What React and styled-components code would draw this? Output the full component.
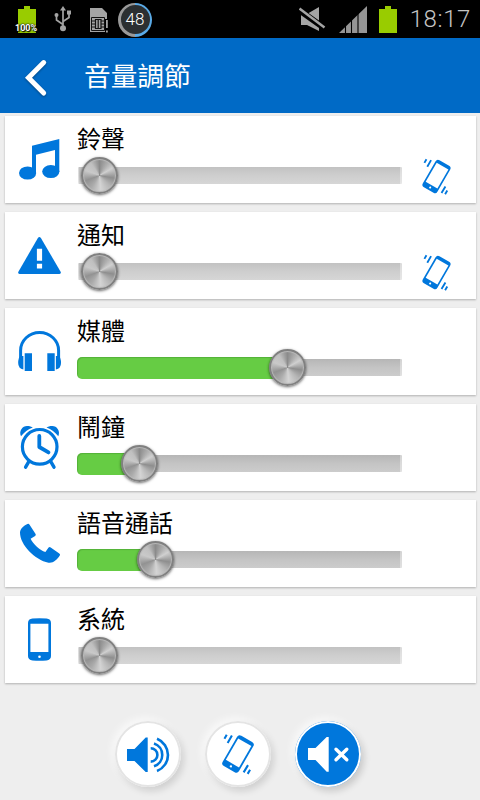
// Styled Components
import styled, { createGlobalStyle, css } from "styled-components";
//

const BLUE = "#0077dc";

// Status bar icons
const BatteryIcon = () => (
  <svg width="18" height="27" viewBox="0 0 18 27">
    <path d="M6 0h6v3h6v24H0V3h6z" fill="#99cc00" />
  </svg>
);

const UsbIcon = () => (
  <svg width="18" height="26" viewBox="0 0 18 26">
    <g fill="none" stroke="#a4a4a4" strokeWidth="1.7">
      <path d="M9 22V3" />
      <path d="M9 18.5L2.5 14V9.5" />
      <path d="M9 15.5L15 11.5V7" />
    </g>
    <g fill="#a4a4a4">
      <circle cx="9" cy="22.3" r="3" />
      <path d="M9 0l3 4.5H6z" />
      <circle cx="2.5" cy="9" r="2" />
      <path d="M13 4.5h4v4h-4z" />
    </g>
  </svg>
);

const SimIcon = () => (
  <svg width="19" height="26" viewBox="0 0 19 26">
    <path d="M0 0h12l5 5v12h-2v7H0z" fill="#a4a4a4" />
    <path d="M1.5 9.5h13v13h-13z" fill="#a4a4a4" stroke="#111" />
    <path
      d="M1.5 13h4M1.5 16h4M1.5 19h4M11 13h4M11 16h4M11 19h4M5.5 11.5h5.5v9H5.500zM8.2 11.5v9"
      fill="none"
      stroke="#111"
      strokeWidth="1.2"
    />
    <path d="M15 11h3v14h-3z" fill="#000" />
    <path d="M16 12h1.8v8H16zM16 22.5h1.8v2H16z" fill="#a4a4a4" />
  </svg>
);

const SilentIcon = () => (
  <svg width="27" height="26" viewBox="0 0 27 26">
    <path d="M2 8h6L20 1v24L8 19H2z" fill="#a4a4a4" />
    <path d="M0 4L26 22.5" stroke="#000" strokeWidth="6" />
    <path d="M.5 2.5L25.5 21.5" stroke="#a4a4a4" strokeWidth="2.4" />
  </svg>
);

const SignalIcon = () => (
  <svg width="28" height="27" viewBox="0 0 28 27">
    <path d="M28 0v27H0z" fill="#959595" />
    <path d="M6.5 15v12M12.5 8v19M19 4v23" stroke="#000" strokeWidth="1.1" />
  </svg>
);
//

// Row icons
const MusicIcon = () => (
  <>
    <path d="M17 9.7L44.3 3v32.7H40V14L21 18.7V37h-4z" />
    <ellipse cx="12.6" cy="37" rx="8.6" ry="6.6" />
    <ellipse cx="35.8" cy="35.6" rx="8.6" ry="6.5" />
  </>
);

const WarningIcon = () => (
  <>
    <path d="M22.9 5.9Q24.4 3.9 25.9 5.9L45.6 39.8Q46.5 41.8 44.5 42h-40Q2.500 41.8 3.4 39.8z" />
    <path
      d="M21.9 16.8h5.2v12h-5.2zM21.9 31.8h5.2v4.6h-5.2z"
      fill="#fff"
    />
  </>
);

const HeadphonesIcon = () => (
  <>
    <path
      d="M5.6 30v-7.5a19 18 0 0 1 38 0V30"
      fill="none"
      stroke={BLUE}
      strokeWidth="3"
    />
    <path d="M8.4 28v13.5Q3.2 40.5 3.2 35T5.5 28z" />
    <path d="M40.9 28v13.5Q46 40.5 46 35T43.7 28z" />
    <path d="M9.7 25.3H17V43H9.7zM32.3 25.3h7.4V43h-7.4z" />
  </>
);

const AlarmIcon = () => (
  <>
    <g fill="none" stroke={BLUE} strokeLinecap="round" strokeLinejoin="round">
      <circle cx="24.7" cy="22.8" r="17.3" strokeWidth="3.2" />
      <path d="M24.3 12v11l9.2 5.4" strokeWidth="3.8" />
      <path d="M13.8 37.6l-3.2 5.6M35.8 37.6l3.2 5.6" strokeWidth="3.4" />
    </g>
    <path d="M6 12.3C3.6 7 7.5 2 12 2c2.6 0 4.6.7 5.8 1.5C13 5.5 9.2 8 6 12.3z" />
    <path d="M43.3 12.3C45.7 7 41.8 2 37.3 2c-2.6 0-4.6.7-5.8 1.5 4.8 2 8.6 4.5 11.8 8.8z" />
  </>
);

const CallIcon = () => (
  <path d="M12.4 4q1.3-.7 2 .4l6.2 9.5q.6 1.2-.5 2L15.6 18.8C18 24 25 30.7 30.4 31.9l3.2-4.3q.9-1 2.1-.2l8.6 6q1.3 1 .5 2.2C42 40 38 43.5 33.5 42.7 20 40 5 25 5 12.5 5.4 8.5 8.5 6 12.4 4z" />
);

const PhoneIcon = () => (
  <>
    <path d="M17.5 2.6Q24.5 1.9 31.5 2.6 36 3 36 7v33q0 4-4.5 4.4-7 .6-14 0Q13 44 13 40V7q0-4 4.5-4.4z" />
    <path d="M15.4 7.7h18V36h-18z" fill="#fff" />
    <circle cx="24.5" cy="40.8" r="1.3" fill="#fff" />
  </>
);

const VibrateIcon = ({ size = 41 }) => (
  <svg width={size} height={size} viewBox="-20 -20 40 40">
    <g transform="rotate(30)">
      <rect x="-8.2" y="-15.2" width="16.4" height="30.4" rx="2.8" fill={BLUE} />
      <path d="M-6.6-11.8H6.6V9.7H-6.6z" fill="#fff" />
      <circle cx="0" cy="12.4" r="1" fill="#fff" />
    </g>
    <path
      d="M-11.8-13.3l2-3.5M-9-9.5l3.7-6.5M4.9 16l3.8-6.3M8.4 17.3l2.1-3.6"
      fill="none"
      stroke={BLUE}
      strokeWidth="1.8"
    />
  </svg>
);
//

// Mode icons
const SoundIcon = () => (
  <svg width="64" height="64" viewBox="0 0 64 64">
    <path d="M11 27h7.5L29.7 15.5h2v34.5h-2L18.5 39H11z" fill={BLUE} />
    <g fill="none" stroke={BLUE} strokeWidth="2.6">
      <path d="M34.7 26.2a6.7 6.7 0 0 1 0 13.4" />
      <path d="M38 21.5a12 12 0 0 1 0 22.8" />
      <path d="M41 16.8a17.3 17.3 0 0 1 0 32.2" />
    </g>
  </svg>
);

const MuteIcon = () => (
  <svg width="64" height="64" viewBox="0 0 64 64">
    <path d="M12 26h7.5L30.7 15h2v34.7h-2L19.5 38H12z" fill="#fff" />
    <path
      d="M40 27.2l10.8 10.5M50.8 27.2L40 37.7"
      stroke="#fff"
      strokeWidth="3.4"
      strokeLinecap="round"
    />
  </svg>
);
//

const rows = [
  { label: "鈴聲", Icon: MusicIcon, knob: 22, vibrate: true },
  { label: "通知", Icon: WarningIcon, knob: 22, vibrate: true },
  { label: "媒體", Icon: HeadphonesIcon, knob: 210, filled: true },
  { label: "鬧鐘", Icon: AlarmIcon, knob: 62, filled: true },
  { label: "語音通話", Icon: CallIcon, knob: 78, filled: true },
  { label: "系統", Icon: PhoneIcon, knob: 22 },
];

const App = () => {
  return (
    <Screen>
      <GlobalStyle />
      <StatusBar>
        <BatteryBadge>
          <BatteryIcon />
          <Percent>100%</Percent>
        </BatteryBadge>
        <UsbIcon />
        <SimSlot>
          <SimIcon />
        </SimSlot>
        <Gauge>
          <span>48</span>
        </Gauge>
        <StatusRight>
          <SilentIcon />
          <SignalIcon />
          <BatteryIcon />
          <Clock>18:17</Clock>
        </StatusRight>
      </StatusBar>

      <Header>
        <BackButton aria-label="back">
          <svg width="28" height="40" viewBox="0 0 28 40">
            <path
              d="M21.7 4.6L6.5 19.8l15.2 15.2"
              fill="none"
              stroke="#fff"
              strokeWidth="5"
              strokeLinecap="round"
            />
          </svg>
        </BackButton>
        <Title>音量調節</Title>
      </Header>

      <List>
        {rows.map(({ label, Icon, knob, filled, vibrate }) => (
          <Card key={label}>
            <RowIcon viewBox="0 0 48 48">
              <Icon />
            </RowIcon>
            <Content>
              <Label>{label}</Label>
              <Slider>
                <Track $filled={filled} />
                {filled && <Fill style={{ width: knob }} />}
                <Knob style={{ left: knob }} />
              </Slider>
            </Content>
            {vibrate && (
              <VibrateButton aria-label="vibrate">
                <VibrateIcon />
              </VibrateButton>
            )}
          </Card>
        ))}
      </List>

      <Modes>
        <ModeButton aria-label="sound">
          <SoundIcon />
        </ModeButton>
        <ModeButton aria-label="vibrate">
          <VibrateIcon size={46} />
        </ModeButton>
        <ModeButton aria-label="mute" $active>
          <MuteIcon />
        </ModeButton>
      </Modes>
    </Screen>
  );
};

export default App;

const GlobalStyle = createGlobalStyle`
  * {
    box-sizing: border-box;
  }

  body {
    margin: 0;
    background: #eeeeee;
    font-family: "Noto Sans CJK TC", sans-serif;
  }

  svg {
    display: block;
    flex: none;
  }

  button {
    padding: 0;
    border: 0;
    background: none;
  }
`;

const Screen = styled.div`
  display: flex;
  flex-direction: column;
  width: 480px;
  height: 800px;
  overflow: hidden;
  background: #eeeeee;
`;

const StatusBar = styled.div`
  display: flex;
  align-items: center;
  height: 38px;
  padding: 0 9px 0 18px;
  background: #000;
`;

const BatteryBadge = styled.div`
  position: relative;
  margin: 1px 18px 0 0;
`;

const Percent = styled.span`
  position: absolute;
  left: -3px;
  bottom: 0;
  font: bold 9px/10px Roboto, sans-serif;
  color: #fff;
  text-shadow: 0 0 1px #000, 0 0 2px #000, 1px 1px 1px #000;
`;

const SimSlot = styled.div`
  margin: 3px 0 0 18px;
`;

const Gauge = styled.div`
  display: flex;
  width: 34px;
  height: 34px;
  margin: 1px 0 0 9px;
  padding: 2.5px;
  border-radius: 50%;
  background: conic-gradient(#5aaae6 0 50%, #999 50% 100%);

  span {
    flex: 1;
    border-radius: 50%;
    background: #2b2f31;
    color: #fff;
    font: 300 17px/29px Roboto, sans-serif;
    text-align: center;
  }
`;

const StatusRight = styled.div`
  display: flex;
  align-items: center;
  gap: 12.5px;
  margin-left: auto;
`;

const Clock = styled.span`
  font: 300 24px/38px Roboto, sans-serif;
  letter-spacing: 0.6px;
  color: #c4c4c4;
`;

const Header = styled.header`
  display: flex;
  align-items: center;
  height: 75px;
  padding: 4px 22px 0;
  background: #006ac6;
`;

const BackButton = styled.button`
  width: 62px;

  svg {
    filter: drop-shadow(0 1px 1px rgba(0, 0, 0, 0.35));
  }
`;

const Title = styled.h1`
  margin: 0 0 5px;
  font-size: 26.67px;
  line-height: 36px;
  font-weight: 400;
  color: #fff;
`;

const List = styled.main`
  display: flex;
  flex-direction: column;
  gap: 9px;
  padding: 3px 4px 0 5px;
`;

const Card = styled.section`
  display: flex;
  height: 87px;
  padding-left: 10px;
  background: #fff;
  box-shadow: 0 1px 2px rgba(0, 0, 0, 0.26);
`;

const RowIcon = styled.svg`
  width: 48px;
  height: 48px;
  margin: 20px 14px 0 0;
  fill: ${BLUE};
`;

const Content = styled.div`
  width: 325px;
  padding-top: 7px;
`;

const Label = styled.div`
  font-size: 24px;
  line-height: 30px;
  color: #000;
`;

const Slider = styled.div`
  position: relative;
  height: 22px;
  margin-top: 12px;
  padding: 2px 0 3px 1px;
`;

const Track = styled.div`
  height: 17px;
  border-right: 2px solid rgba(255, 255, 255, 0.4);
  border-left: 1px solid rgba(255, 255, 255, 0.4);
  border-radius: 1px;
  background: ${({ $filled }) =>
    $filled
      ? "linear-gradient(#b6b6b6, #c4c4c4 50%, #cccccc)"
      : "linear-gradient(#c2c2c2, #cecece 50%, #d6d6d6)"};
`;

const Fill = styled.div`
  position: absolute;
  top: 0;
  left: 0;
  height: 22px;
  border-radius: 5px 0 0 5px;
  background: #66cc44;
  box-shadow: inset 1px 1px 1px rgba(0, 60, 0, 0.18);
`;

const Knob = styled.div`
  position: absolute;
  top: -8px;
  width: 37px;
  height: 37px;
  margin-left: -18.5px;
  border: 2px solid #808080;
  border-radius: 50%;
  background: conic-gradient(
    #8b8b8b,
    #b0b0b0 35deg,
    #d0d0d0 60deg,
    #8e8e8e 100deg,
    #b5b5b5 135deg,
    #d4d4d4 175deg,
    #aaaaaa 215deg,
    #929292 250deg,
    #c9c9c9 290deg,
    #c0c0c0 325deg,
    #8b8b8b
  );
  box-shadow: 0 1px 3px rgba(0, 0, 0, 0.6), inset 0 0 1px 1px #b9b9b9;
`;

const VibrateButton = styled.button`
  align-self: flex-start;
  margin: 40px 0 0 14px;
`;

const Modes = styled.footer`
  display: flex;
  justify-content: center;
  gap: 24px;
  padding: 38px 4px 0 0;
`;

const ModeButton = styled.button`
  display: flex;
  align-items: center;
  justify-content: center;
  width: 66px;
  height: 66px;
  border-radius: 50%;
  background: #fff;
  box-shadow: inset 0 0 0 2px #e4e4e4, 3px 4px 7px rgba(0, 0, 0, 0.13),
    -3px -3px 8px rgba(255, 255, 255, 0.7);

  ${({ $active }) =>
    $active &&
    css`
      background: ${BLUE};
      box-shadow: inset 0 0 0 2px #fff, 3px 4px 7px rgba(0, 0, 0, 0.16),
        -3px -3px 8px rgba(255, 255, 255, 0.7);
    `}
`;
